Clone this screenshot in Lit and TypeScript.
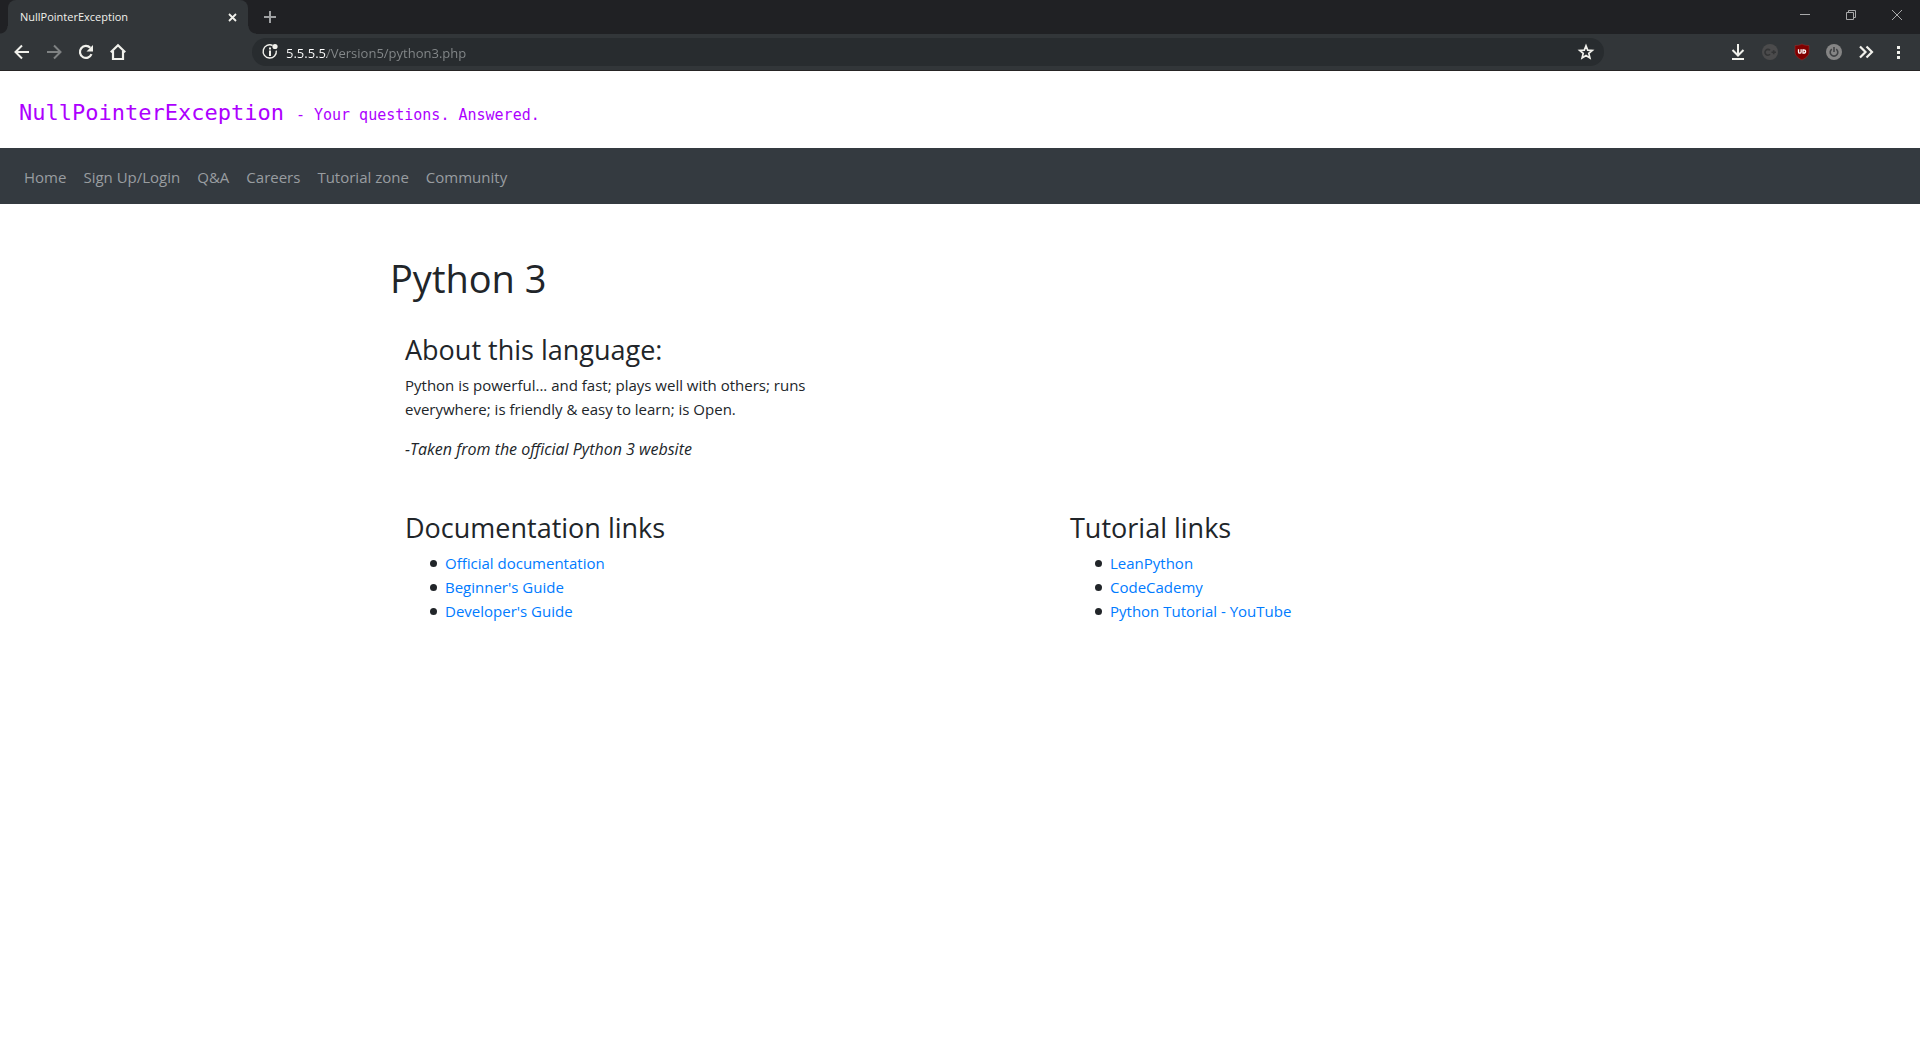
import { LitElement, html, css, svg } from "lit";
import { customElement } from "lit/decorators.js";

const icons = {
  close: svg`<path d="M4 4l7 7M11 4l-7 7" stroke-width="1.800"/>`,
  plus: svg`<path d="M8 2v12M2 8h12" stroke-width="2"/>`,
  back: svg`<path d="M17 10H4M10 3.500L3.500 10l6.500 6.500" stroke-width="2"/>`,
  forward: svg`<path d="M3 10h13M10 3.500l6.500 6.500L10 16.500" stroke-width="2"/>`,
  reload: svg`<path d="M15.500 12.200A6 6 0 1 1 14.300 5.800" stroke-width="2.200"/><path d="M17 3v6.500h-6.500z" fill="currentColor" stroke="none"/>`,
  home: svg`<path d="M2.800 10.300L10 3.200l7.200 7.100M5 9v8h10V9" stroke-width="2.200"/>`,
  info: svg`<path d="M12.600 3.500A6.600 6.600 0 1 0 16.300 8.600" stroke-width="1.400"/><path d="M10 8.500V14M10 5.500v2" stroke-width="2"/><circle cx="15" cy="4.500" r="2.600" fill="currentColor" stroke="none"/>`,
  star: svg`<path d="M10 3.800l1.700 4.300 4.600.3-3.500 3 1.100 4.500L10 13.500l-3.900 2.400 1.100-4.500-3.500-3 4.600-.3z" stroke-width="1.700"/>`,
  download: svg`<path d="M10 2v11M4.500 8l5.500 5.500L15.500 8M4 17h12" stroke-width="2"/>`,
  minimize: svg`<path d="M5 9.500h10"/>`,
  restore: svg`<path d="M5.500 7.500h7v7h-7zM7.500 7.500v-2h7v7h-2"/>`,
  windowClose: svg`<path d="M5 5l10 10M15 5L5 15"/>`,
  cplus: svg`<circle cx="10" cy="10" r="8" fill="#4b4b4c" stroke="none"/><path d="M10 8.300A2.900 2.900 0 1 0 10 12.300M11.500 10.300h4.500M13.700 8.300v4" stroke="#333435" stroke-width="1.600"/>`,
  shield: svg`<path d="M10 2c2 1.200 4.500 1.500 7 1.500V10c0 3.500-3 6-7 8-4-2-7-4.500-7-8V3.500C5.500 3.500 8 3.200 10 2z" fill="#800000" stroke="#933" stroke-width=".5"/><path d="M6.500 7.200v2.800q0 1.200 1.300 1.200t1.300-1.200V7.200M11 7.800v3.400h.6q2 0 2-1.700t-2-1.700z" stroke="#fff" stroke-width="1.300"/>`,
  power: svg`<circle cx="10" cy="10" r="8" fill="#858585" stroke="none"/><path d="M7.800 7.200a3.800 3.800 0 1 0 4.400 0M10 5v5" stroke="#404244" stroke-width="1.600"/>`,
  more: svg`<path d="M4 4.500L9.500 10 4 15.500M10.500 4.500L16 10l-5.500 5.500" stroke-width="2.200"/>`,
  menu: svg`<path d="M9 4h3v3H9zM9 9h3v3H9zM9 14h3v3H9z" fill="currentColor" stroke="none"/>`,
};

const icon = (name: keyof typeof icons, box = 20) =>
  html`<svg width=${box} height=${box} viewBox="0 0 ${box} ${box}" fill="none" stroke="currentColor" aria-hidden="true">${icons[name]}</svg>`;

@customElement("browser-chrome")
class BrowserChrome extends LitElement {
  static styles = css`
    :host {
      display: block;
      color: #f1f1ec;
      font-family: "Open Sans", "Noto Sans", sans-serif;
      background: #323639;
      border-bottom: 1px solid #262424;
    }
    button {
      display: flex;
      align-items: center;
      justify-content: center;
      padding: 0;
      border: 0;
      color: inherit;
      background: none;
    }
    svg { display: block; flex: none; }
    .strip {
      display: flex;
      height: 34px;
      padding-left: 8px;
      background: #202124;
    }
    .tab {
      display: flex;
      align-items: center;
      justify-content: space-between;
      width: 240px;
      padding: 0 8px 0 12px;
      box-sizing: border-box;
      border-radius: 8px 8px 0 0;
      background: #323639;
      font-size: 11px;
      position: relative;
    }
    .tab::before,
    .tab::after {
      content: "";
      position: absolute;
      bottom: 0;
      width: 8px;
      height: 8px;
    }
    .tab::before {
      left: -8px;
      background: radial-gradient(circle at 0 0, #202124 7px, #323639 8px);
    }
    .tab::after {
      right: -8px;
      background: radial-gradient(circle at 100% 0, #202124 7px, #323639 8px);
    }
    .close { width: 16px; height: 16px; }
    .new { width: 44px; color: #9fa1a3; }
    .window { display: flex; margin-left: auto; color: #a8a9aa; }
    .window button { width: 46px; height: 30px; }
    .bar { display: flex; align-items: center; height: 36px; padding: 0 6px; }
    .tool { width: 32px; height: 32px; }
    .tool:disabled { color: #7f8283; }
    .omnibox {
      display: flex;
      flex: 1;
      align-items: center;
      height: 28px;
      margin: 0 118px;
      padding: 0 8px;
      box-sizing: border-box;
      border-radius: 14px;
      background: #282c2f;
    }
    .address {
      flex: 1;
      min-width: 0;
      height: 24px;
      margin-left: 6px;
      padding: 2px 0 0;
      box-sizing: border-box;
      border: 0;
      font: 13px "Open Sans", "Noto Sans", sans-serif;
      color: transparent;
      background: linear-gradient(90deg, #fff 41px, #85898b 41px);
      -webkit-background-clip: text;
      background-clip: text;
    }
  `;

  render() {
    return html`
      <div class="strip">
        <div class="tab">
          <span>NullPointerException</span>
          <button class="close" aria-label="Close tab">${icon("close", 15)}</button>
        </div>
        <button class="new" aria-label="New tab">${icon("plus", 16)}</button>
        <div class="window">
          <button aria-label="Minimize">${icon("minimize")}</button>
          <button aria-label="Restore">${icon("restore")}</button>
          <button aria-label="Close">${icon("windowClose")}</button>
        </div>
      </div>
      <div class="bar">
        <button class="tool" aria-label="Back">${icon("back")}</button>
        <button class="tool" aria-label="Forward" disabled>${icon("forward")}</button>
        <button class="tool" aria-label="Reload">${icon("reload")}</button>
        <button class="tool" aria-label="Home">${icon("home")}</button>
        <div class="omnibox">
          <button aria-label="Site information">${icon("info")}</button>
          <input class="address" type="text" aria-label="Address" value="5.5.5.5/Version5/python3.php" />
          <button aria-label="Bookmark">${icon("star")}</button>
        </div>
        <button class="tool" aria-label="Downloads">${icon("download")}</button>
        <button class="tool" aria-label="C+ extension">${icon("cplus")}</button>
        <button class="tool" aria-label="Shield extension">${icon("shield")}</button>
        <button class="tool" aria-label="Power extension">${icon("power")}</button>
        <button class="tool" aria-label="More extensions">${icon("more")}</button>
        <button class="tool" aria-label="Menu">${icon("menu")}</button>
      </div>
    `;
  }
}

const navLinks = ["Home", "Sign Up/Login", "Q&A", "Careers", "Tutorial zone", "Community"];

const linkGroups = [
  { title: "Documentation links", links: ["Official documentation", "Beginner's Guide", "Developer's Guide"] },
  { title: "Tutorial links", links: ["LeanPython", "CodeCademy", "Python Tutorial - YouTube"] },
];

@customElement("app-root")
class AppRoot extends LitElement {
  static styles = css`
    :host {
      display: block;
      min-height: 100vh;
      background: #fff;
      color: #212529;
      font: 15px/24px "Open Sans", "Noto Sans", sans-serif;
    }
    a { text-decoration: none; }
    .banner {
      display: flex;
      align-items: baseline;
      gap: 12px;
      padding: 26px 19px 19px;
      color: #ad00ff;
      font-family: "DejaVu Sans Mono", monospace;
    }
    .brand { font-size: 22px; line-height: 32px; }
    .tagline { font-size: 15px; }
    .nav {
      display: flex;
      gap: 17px;
      padding: 17px 24px 15px;
      background: #343a40;
    }
    .nav a { color: #999da0; }
    .main { padding: 50px 200px 48px 390px; }
    h1, h2, p, ul { margin: 0; font-weight: 400; }
    h1 { font-size: 38px; line-height: 48px; }
    h2 { margin-bottom: 7px; font-size: 27px; line-height: 32px; }
    .about {
      width: 33.33%;
      margin-top: 32px;
      padding: 0 15px;
      box-sizing: border-box;
    }
    .about p { margin-bottom: 16px; }
    .about em { font-size: 16px; }
    .groups {
      display: grid;
      grid-template-columns: 1fr 1fr;
      margin-top: 51px;
    }
    .group { padding: 0 15px; }
    .group ul { padding-left: 25px; list-style: none; }
    .group li { display: flex; align-items: center; gap: 8px; }
    .group li::before {
      content: "";
      width: 7px;
      height: 7px;
      border-radius: 50%;
      background: #212529;
    }
    .group a { color: #007bff; }
  `;

  render() {
    return html`
      <browser-chrome></browser-chrome>
      <header class="banner">
        <span class="brand">NullPointerException</span>
        <span class="tagline">- Your questions. Answered.</span>
      </header>
      <nav class="nav">${navLinks.map((label) => html`<a href="#">${label}</a>`)}</nav>
      <main class="main">
        <h1>Python 3</h1>
        <section class="about">
          <h2>About this language:</h2>
          <p>Python is powerful... and fast; plays well with others; runs everywhere; is friendly &amp; easy to learn; is Open.</p>
          <p><em>-Taken from the official Python 3 website</em></p>
        </section>
        <div class="groups">
          ${linkGroups.map(
            (group) => html`
              <section class="group">
                <h2>${group.title}</h2>
                <ul>
                  ${group.links.map((label) => html`<li><a href="#">${label}</a></li>`)}
                </ul>
              </section>
            `
          )}
        </div>
      </main>
    `;
  }
}
